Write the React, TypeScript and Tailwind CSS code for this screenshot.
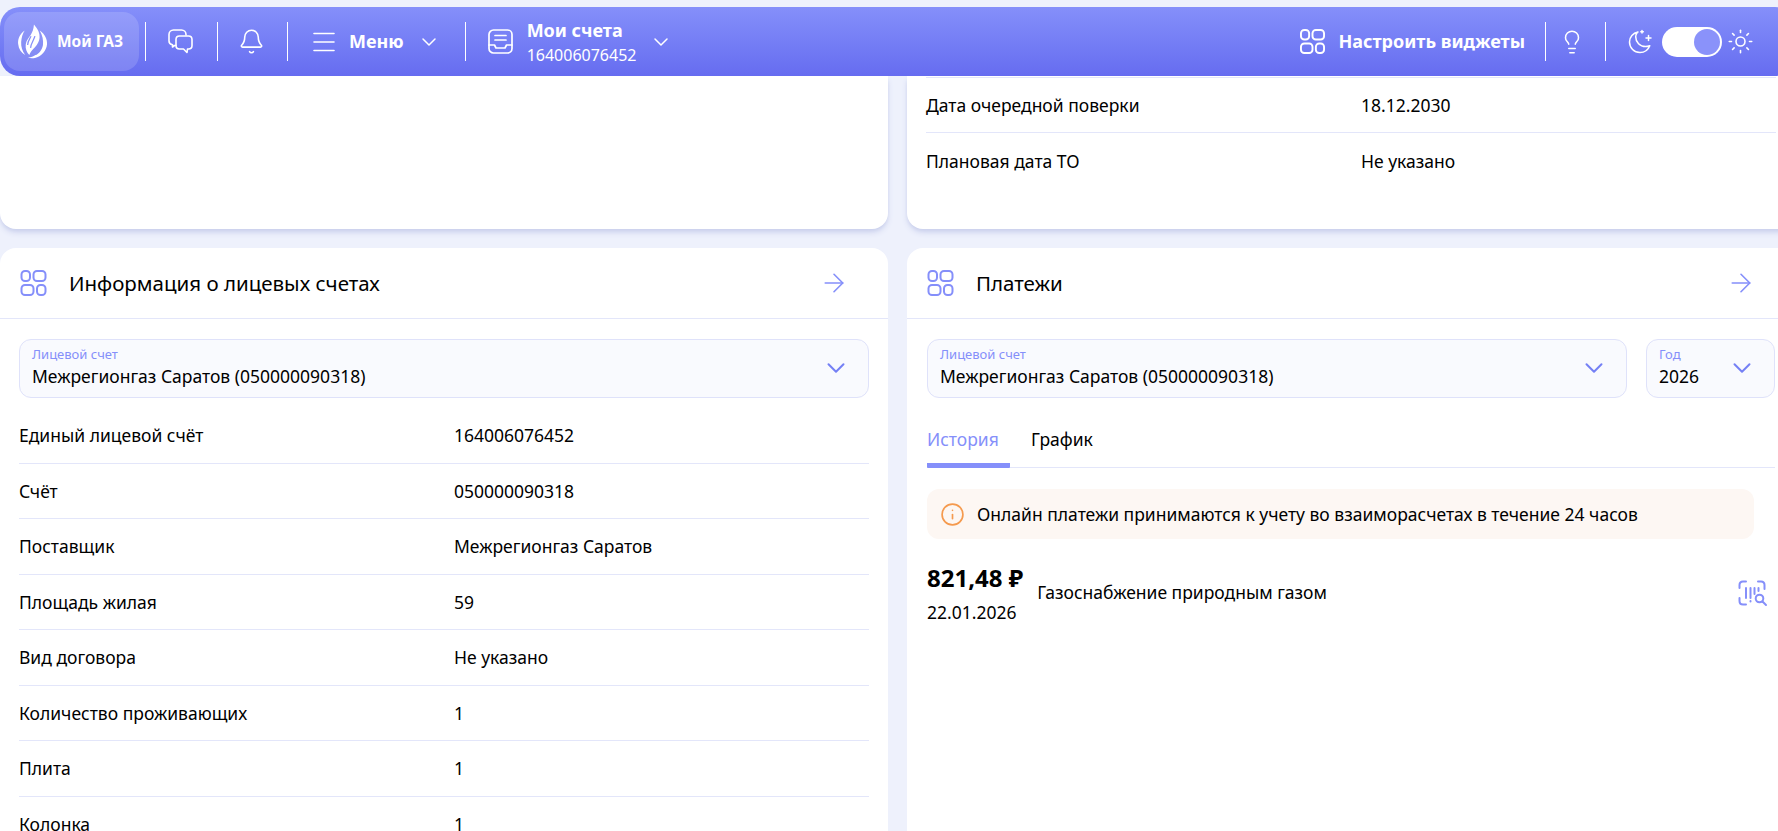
import { ArrowRight, Bell, ChevronDown, Info, Lightbulb, Sun } from "lucide-react";

const rows = [
  ["Единый лицевой счёт", "164006076452"],
  ["Счёт", "050000090318"],
  ["Поставщик", "Межрегионгаз Саратов"],
  ["Площадь жилая", "59"],
  ["Вид договора", "Не указано"],
  ["Количество проживающих", "1"],
  ["Плита", "1"],
  ["Колонка", "1"],
];

function WidgetsIcon({ className }: { className: string }) {
  return (
    <svg viewBox="0 0 26 26" fill="none" stroke="currentColor" strokeWidth="2" className={className}>
      <rect x="1" y="1" width="8.5" height="10" rx="3.5" />
      <rect x="13" y="1" width="12" height="10" rx="3.5" />
      <rect x="1" y="15" width="12" height="10" rx="3.5" />
      <rect x="16.5" y="15" width="8.5" height="10" rx="3.5" />
    </svg>
  );
}

function Separator() {
  return <div className="h-[39px] w-px shrink-0 bg-white" />;
}

function Logo() {
  return (
    <svg viewBox="0 0 32 36" fill="none" className="h-[36px] w-[31px] shrink-0">
      <path d="M8 6C2 10 .8 16 1.2 20c.5 5 3 9 7.3 11.5C5.5 27 4 23 4.3 18 4.6 13 6 9 8 6Z" fill="white" />
      <path d="M23.5 6c5.5 4 7.8 9 7.5 14-.4 7-6 13-12.5 14.5-2.4.6-5.500.4-7.500-.5 3 .2 5.500-.6 8-2.500 3.500-1 7-5.500 7.800-10.500.6-5-.5-10-3.300-15Z" fill="white" />
      <path d="M17.500 0c2 3 6 6.500 5.800 13-.2 5-3.300 9-6.300 12-1.500 1.500-3.500 4-4.300 6.500-2.500-2.500-4.200-6.500-3.700-11 .5-4 3-6.500 5-9.500 1.700-2.600 3.200-6 3.500-11Z" fill="white" />
      <path d="M14.500 12c-1.500 3-3.500 5.500-3.500 9M18.500 12c-1 4-4 7-4.500 12" stroke="#858ffa" strokeWidth="1.300" />
    </svg>
  );
}

function ChatIcon() {
  return (
    <svg viewBox="0 0 25 25" fill="none" stroke="white" strokeWidth="1.600" className="h-[25px] w-[25px] shrink-0">
      <path d="M8.500 16.500H6.500L4.500 18v-2.200C2.300 15.300 1 13.800 1 12V5.500C1 3 3 1 5.500 1h8C16 1 18 3 18 5.500v1" strokeLinejoin="round" />
      <path d="M11.500 7h9c2 0 3.500 1.500 3.500 3.500v6c0 2-1.500 3.500-3.500 3.500h-1l-.5 3.500-3.500-3.500h-4c-2 0-3.500-1.500-3.500-3.500v-6C8 8.500 9.500 7 11.500 7Z" strokeLinejoin="round" />
    </svg>
  );
}

function MenuIcon() {
  return (
    <svg viewBox="0 0 22 20" fill="none" stroke="white" strokeWidth="1.600" strokeLinecap="round" className="h-[20px] w-[22px] shrink-0">
      <path d="M1 1.500h20M1 10h20M1 18.500h20" />
    </svg>
  );
}

function InboxIcon() {
  return (
    <svg viewBox="0 0 25 25" fill="none" stroke="white" strokeWidth="1.700" strokeLinecap="round" strokeLinejoin="round" className="h-[25px] w-[25px] shrink-0">
      <rect x="1" y="1" width="23" height="23" rx="4.500" />
      <path d="M1 16h5.500l1.500 3h9l1.500-3H24M7 6.500h11M7 11h11" />
    </svg>
  );
}

function MoonIcon() {
  return (
    <svg viewBox="0 0 25 25" fill="none" stroke="white" strokeWidth="1.500" strokeLinecap="round" strokeLinejoin="round" className="h-[25px] w-[25px] shrink-0">
      <path d="M10 3C5 4 1.500 8 1.500 13c0 5.800 4.700 10.500 10.500 10.500 4.500 0 8.200-2.800 9.800-6.800-1.300.6-2.800.9-4.300.9-5.500 0-9.800-4.400-9.800-9.800 0-1.700.7-3.300 1.800-4.800Z" />
      <path d="M20.500 6.500v5M18 9h5M14 1.500v2.500M12.800 2.800h2.500" />
    </svg>
  );
}

function QrSearchIcon() {
  return (
    <svg viewBox="0 0 30 27" fill="none" stroke="#858ffa" strokeWidth="2" strokeLinecap="round" className="h-[27px] w-[30px] shrink-0">
      <path d="M1.500 8V5c0-2 1.500-3.500 3.500-3.500h3M20 1.500h3c2 0 3.500 1.500 3.500 3.500v4M1.500 18v3c0 2 1.500 3.500 3.500 3.500h3" />
      <path d="M8 8v10M12.500 8v10M12.500 21v.5M16.500 8v6M20.500 8v3" />
      <circle cx="21.500" cy="18.500" r="3.800" />
      <path d="m24.500 21.500 3.500 3.500" />
    </svg>
  );
}

function Select({ label, value, className }: { label: string; value: string; className: string }) {
  return (
    <div className={`relative h-[59px] rounded-xl border border-[#dfe2fa] bg-[#f9fafe] px-[12px] pt-[5px] ${className}`}>
      <div className="text-[13px] leading-[18px] text-[#858ffa]">{label}</div>
      <div className="text-[17.5px] leading-[26px] text-black">{value}</div>
      <ChevronDown className="absolute right-[17px] top-[13px] h-[30px] w-[30px] text-[#7580f5]" strokeWidth={1.6} />
    </div>
  );
}

function CardHeader({ title }: { title: string }) {
  return (
    <div className="flex h-[71px] items-center border-b border-[#e3e6fa] px-[20px]">
      <WidgetsIcon className="h-[26px] w-[27px] text-[#858ffa]" />
      <span className="ml-[22px] text-[20.500px] text-black">{title}</span>
      <ArrowRight className="ml-auto mr-[19px] h-[30px] w-[30px] text-[#858ffa]" strokeWidth={1.3} />
    </div>
  );
}

export default function App() {
  return (
    <div className="h-screen w-full overflow-hidden bg-[#eef1fc] pt-[7px] font-['Noto_Sans',sans-serif]">
      <div className="w-[1795px]">
        {/* HEADER */}
        <div className="relative z-10 flex h-[69px] items-center rounded-[20px] bg-linear-to-b from-[#858ffa] to-[#666cf0] pl-[4px] text-white">
          <div className="flex h-[59px] w-[135px] items-center rounded-2xl bg-white/15 pl-[13px]">
            <Logo />
            <span className="ml-[9px] text-[15.500px] font-bold">Мой ГАЗ</span>
          </div>
          <div className="ml-[6px]"><Separator /></div>
          <div className="ml-[22px]"><ChatIcon /></div>
          <div className="ml-[24px]"><Separator /></div>
          <Bell className="ml-[20px] h-[27px] w-[27px]" strokeWidth={1.4} />
          <div className="ml-[22px]"><Separator /></div>
          <div className="ml-[25px]"><MenuIcon /></div>
          <span className="ml-[14px] text-[18px] font-bold">Меню</span>
          <ChevronDown className="ml-[13px] h-[24px] w-[24px]" strokeWidth={1.5} />
          <div className="ml-[24px]"><Separator /></div>
          <div className="ml-[22px]"><InboxIcon /></div>
          <div className="ml-[14px] flex flex-col">
            <span className="text-[18px] font-bold leading-[26px]">Мои счета</span>
            <span className="text-[16px] leading-[24px]">164006076452</span>
          </div>
          <ChevronDown className="ml-[13px] h-[24px] w-[24px]" strokeWidth={1.5} />

          <WidgetsIcon className="ml-[627px] h-[25px] w-[25px] text-white" />
          <span className="ml-[13px] text-[18px] font-bold">Настроить виджеты</span>
          <div className="ml-[20px]"><Separator /></div>
          <Lightbulb className="ml-[13px] h-[26px] w-[26px]" strokeWidth={1.4} />
          <div className="ml-[20px]"><Separator /></div>
          <div className="ml-[22px]"><MoonIcon /></div>
          <div className="ml-[9px] flex h-[30px] w-[60px] items-center justify-end rounded-full bg-white pr-[2px]">
            <div className="h-[26px] w-[26px] rounded-full bg-[#8a92fa]" />
          </div>
          <Sun className="ml-[5px] h-[27px] w-[27px]" strokeWidth={1.4} />
        </div>

        <div className="grid grid-cols-2 gap-[19px]">
          {/* LEFT COLUMN */}
          <div className="flex flex-col gap-[19px]">
            <div className="h-[153px] rounded-b-2xl bg-white shadow-md shadow-[#c9cfec]" />
            <div className="h-[600px] rounded-2xl bg-white">
              <CardHeader title="Информация о лицевых счетах" />
              <div className="px-[19px] pt-[20px]">
                <Select label="Лицевой счет" value="Межрегионгаз Саратов (050000090318)" className="w-full" />
                <div className="mt-[10px]">
                  {rows.map((row) => (
                    <div key={row[0]} className="grid h-[55.500px] grid-cols-[435px_1fr] items-center border-b border-[#e3e6fa] text-[17.500px] text-black">
                      <span>{row[0]}</span>
                      <span>{row[1]}</span>
                    </div>
                  ))}
                </div>
              </div>
            </div>
          </div>

          {/* RIGHT COLUMN */}
          <div className="flex flex-col gap-[19px]">
            <div className="h-[153px] rounded-b-2xl bg-white px-[19px] pt-px shadow-md shadow-[#c9cfec]">
              <div className="grid h-[56px] grid-cols-[435px_1fr] items-center border-y border-[#e3e6fa] text-[17.500px] text-black">
                <span>Дата очередной поверки</span>
                <span>18.12.2030</span>
              </div>
              <div className="grid h-[56px] grid-cols-[435px_1fr] items-center text-[17.500px] text-black">
                <span>Плановая дата ТО</span>
                <span>Не указано</span>
              </div>
            </div>
            <div className="h-[600px] rounded-2xl bg-white">
              <CardHeader title="Платежи" />
              <div className="px-[20px] pt-[20px]">
                <div className="flex gap-[19px]">
                  <Select label="Лицевой счет" value="Межрегионгаз Саратов (050000090318)" className="flex-1" />
                  <Select label="Год" value="2026" className="w-[129px]" />
                </div>
                <div className="mt-[21px] flex h-[49px] gap-[21px] border-b border-[#e3e6fa] text-[17.500px]">
                  <span className="h-[49px] w-[83px] rounded-b-[1px] border-b-[5px] border-[#858ffa] pt-[7px] text-[#858ffa]">История</span>
                  <span className="pt-[7px] text-black">График</span>
                </div>
                <div className="mt-[21px] flex h-[50px] w-[827px] items-center rounded-xl bg-[#fdf7f3] pl-[13px]">
                  <Info className="h-[25px] w-[25px] text-[#f59a4e]" strokeWidth={1.6} />
                  <span className="ml-[12px] text-[17.500px] text-black">Онлайн платежи принимаются к учету во взаиморасчетах в течение 24 часов</span>
                </div>
                <div className="mt-[20px] flex items-start">
                  <div className="flex flex-col">
                    <span className="text-[24px] font-bold leading-[38px] text-black">821,48 ₽</span>
                    <span className="text-[17.500px] leading-[30px] text-black">22.01.2026</span>
                  </div>
                  <span className="ml-[14px] mt-[20px] text-[17.500px] text-black">Газоснабжение природным газом</span>
                  <div className="ml-auto mr-[7px] mt-[21px]"><QrSearchIcon /></div>
                </div>
              </div>
            </div>
          </div>
        </div>
      </div>
    </div>
  );
}
